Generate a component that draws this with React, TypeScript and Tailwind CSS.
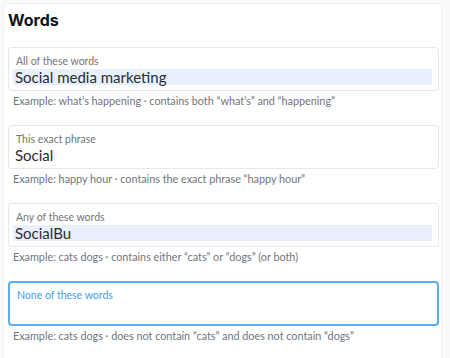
import React from 'react';

const fields = [
  {
    label: 'All of these words',
    value: 'Social media marketing',
    filled: true,
    hint: 'Example: what’s happening · contains both “what’s” and “happening”',
  },
  {
    label: 'This exact phrase',
    value: 'Social',
    filled: false,
    hint: 'Example: happy hour · contains the exact phrase “happy hour”',
  },
  {
    label: 'Any of these words',
    value: 'SocialBu',
    filled: true,
    hint: 'Example: cats dogs · contains either “cats” or “dogs” (or both)',
  },
  {
    label: 'None of these words',
    value: '',
    filled: false,
    focused: true,
    hint: 'Example: cats dogs · does not contain “cats” and does not contain “dogs”',
  },
];

export default function App() {
  return (
    <div className="w-[450px] h-[358px] bg-[#f9fafb] pl-[3px] pr-[8px] pt-[3px] overflow-hidden" style={{ fontFamily: 'Lato, "Noto Sans", sans-serif' }}>
      <div className="bg-white border border-[#eef0f2] rounded-[3px] h-[400px] pl-[4px] pr-[2px]">
        <h2 className="text-[16px] font-bold text-[#0f1419] leading-[20px] pt-[6px]" style={{ fontFamily: 'Inter, sans-serif' }}>
          Words
        </h2>
        <div className="mt-[17px] flex flex-col">
          {fields.map((f) => (
            <div key={f.label} className="mb-[17px]">
              <div
                className={
                  f.focused
                    ? 'h-[45px] rounded-[4px] border-2 border-[#5aaef0] pl-[6px] pr-[6px] pt-[5px]'
                    : 'h-[44px] rounded-[3px] border border-[#e6e8eb] pl-[4px] pr-[6px] pt-[6px]'
                }
              >
                <div className={f.focused ? 'text-[10.5px] leading-[14px] text-[#3ea0ef] pl-[1px]' : 'text-[10.5px] leading-[14px] text-[#71767b] pl-[3px]'}>
                  {f.label}
                </div>
                <div
                  className={
                    (f.filled ? 'bg-[#e8f0fe] ' : '') +
                    'mt-[1px] h-[16px] text-[15px] leading-[16px] text-[#2a2e33] pl-[2px]'
                  }
                >
                  {f.value}
                </div>
              </div>
              <div className="text-[10.8px] leading-[14px] text-[#6e767d] pl-[5px] pt-[3px]">{f.hint}</div>
            </div>
          ))}
        </div>
      </div>
    </div>
  );
}
